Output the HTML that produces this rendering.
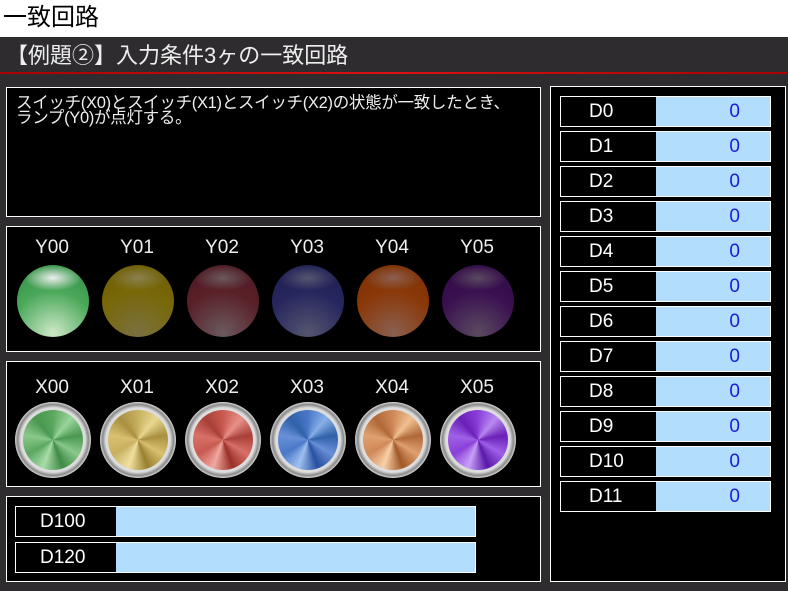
<!DOCTYPE html>
<html><head><meta charset="utf-8"><style>
*{margin:0;padding:0;box-sizing:border-box}
body{width:788px;height:591px;background:#2e2c2f;position:relative;overflow:hidden;font-family:"Liberation Sans","Noto Sans CJK JP",sans-serif;color:#fff}
.top{position:absolute;left:0;top:0;width:788px;height:37px;background:#fff;color:#000;font-size:24px;line-height:35px;padding-left:3px}
.sub{position:absolute;left:0;top:37px;width:788px;height:36px;background:#2e2c2f;font-size:22px;line-height:38px;padding-left:6px;color:#eee}
.red{position:absolute;left:0;top:72px;width:788px;height:2px;background:linear-gradient(90deg,#a00,#d11 50%,#a00)}
.p{position:absolute;background:#000;border:1px solid #fff}
.lab{position:absolute;width:80px;text-align:center;font-size:19px;color:#eee}
.lamp{position:absolute;width:72px;height:72px;border-radius:50%}
.btn{position:absolute;width:76px;height:76px;border-radius:50%;background:radial-gradient(circle,#ddd 60%,#888 66%,#eee 72%,#666 100%)}
.btn i{position:absolute;left:8px;top:8px;width:60px;height:60px;border-radius:50%}
.d{position:absolute;height:31px;border:1px solid #fff;background:#000;font-size:19px}
.d span{position:absolute;left:28px;top:4px}
.d b{position:absolute;font-weight:normal;background:#b3ddfd;top:0;bottom:0;color:#1a1adc;text-align:right;padding-right:30px;line-height:30px}
</style></head><body>
<div class="top">一致回路</div>
<div class="sub">【例題②】入力条件3ヶの一致回路</div>
<div class="red"></div>
<div class="p" style="left:6px;top:87px;width:535px;height:130px;font-size:16.5px;line-height:15px;padding:8px 0 0 9px;color:#eee;letter-spacing:-0.3px">スイッチ(X0)とスイッチ(X1)とスイッチ(X2)の状態が一致したとき、<br>ランプ(Y0)が点灯する。</div>
<div class="p" style="left:6px;top:226px;width:535px;height:126px"></div>
<div class="p" style="left:6px;top:361px;width:535px;height:126px"></div>
<div class="p" style="left:6px;top:496px;width:535px;height:86px"></div>
<div class="p" style="left:550px;top:86px;width:236px;height:496px"></div>

<div class="lab" style="left:12px;top:237px">Y00</div>
<div class="lab" style="left:97px;top:237px">Y01</div>
<div class="lab" style="left:182px;top:237px">Y02</div>
<div class="lab" style="left:267px;top:237px">Y03</div>
<div class="lab" style="left:352px;top:237px">Y04</div>
<div class="lab" style="left:437px;top:237px">Y05</div>
<div class="lamp" style="left:17px;top:265px;background:radial-gradient(ellipse 40% 18% at 50% 18%,#eee,transparent),radial-gradient(circle at 50% 95%,#cfe8c8,#4aa85a 55%,#2e8a3e)"></div>
<div class="lamp" style="left:102px;top:265px;background:radial-gradient(ellipse 40% 18% at 50% 18%,#8a8050,transparent),radial-gradient(circle at 50% 95%,#7a7040,#786808 55%,#6a5a00)"></div>
<div class="lamp" style="left:187px;top:265px;background:radial-gradient(ellipse 40% 18% at 50% 18%,#6a5a5e,transparent),radial-gradient(circle at 50% 95%,#6a5a5e,#5a2028 55%,#4a1820)"></div>
<div class="lamp" style="left:272px;top:265px;background:radial-gradient(ellipse 40% 18% at 50% 18%,#555570,transparent),radial-gradient(circle at 50% 95%,#555570,#26265e 55%,#1e1e50)"></div>
<div class="lamp" style="left:357px;top:265px;background:radial-gradient(ellipse 40% 18% at 50% 18%,#8a6050,transparent),radial-gradient(circle at 50% 95%,#8a6050,#8a3808 55%,#7a2e00)"></div>
<div class="lamp" style="left:442px;top:265px;background:radial-gradient(ellipse 40% 18% at 50% 18%,#5a4a60,transparent),radial-gradient(circle at 50% 95%,#5a4a60,#3a1050 55%,#300a44)"></div>

<div class="lab" style="left:12px;top:377px">X00</div>
<div class="lab" style="left:97px;top:377px">X01</div>
<div class="lab" style="left:182px;top:377px">X02</div>
<div class="lab" style="left:267px;top:377px">X03</div>
<div class="lab" style="left:352px;top:377px">X04</div>
<div class="lab" style="left:437px;top:377px">X05</div>
<div class="btn" style="left:15px;top:402px"><i style="background:conic-gradient(#5aa860,#9ad49a,#4a9850,#8ac88a,#3e8a46,#a8dca8,#5aa860,#8ac88a,#4a9850,#5aa860)"></i></div>
<div class="btn" style="left:100px;top:402px"><i style="background:conic-gradient(#c8b060,#e8d890,#a89040,#d8c070,#988030,#f0e0a0,#c8b060,#d8c070,#a89040,#c8b060)"></i></div>
<div class="btn" style="left:185px;top:402px"><i style="background:conic-gradient(#c85a50,#e89088,#a84038,#d87068,#983028,#f0a8a0,#c85a50,#d87068,#a84038,#c85a50)"></i></div>
<div class="btn" style="left:270px;top:402px"><i style="background:conic-gradient(#4a78c8,#88b0e8,#3060a8,#6890d8,#2850a0,#a0c0f0,#4a78c8,#6890d8,#3060a8,#4a78c8)"></i></div>
<div class="btn" style="left:355px;top:402px"><i style="background:conic-gradient(#d08858,#f0c090,#b06838,#e0a070,#a05828,#f8d0a8,#d08858,#e0a070,#b06838,#d08858)"></i></div>
<div class="btn" style="left:440px;top:402px"><i style="background:conic-gradient(#8a40d8,#b888f0,#6a20b8,#a060e8,#5a18a8,#c8a0f8,#8a40d8,#a060e8,#6a20b8,#8a40d8)"></i></div>

<div class="d" style="left:15px;top:506px;width:461px"><span style="left:24px">D100</span><b style="left:100px;right:0"></b></div>
<div class="d" style="left:15px;top:542px;width:461px"><span style="left:24px">D120</span><b style="left:100px;right:0"></b></div>

<div class="d" style="left:560px;top:96px;width:211px"><span>D0</span><b style="left:95px;right:0">0</b></div>
<div class="d" style="left:560px;top:131px;width:211px"><span>D1</span><b style="left:95px;right:0">0</b></div>
<div class="d" style="left:560px;top:166px;width:211px"><span>D2</span><b style="left:95px;right:0">0</b></div>
<div class="d" style="left:560px;top:201px;width:211px"><span>D3</span><b style="left:95px;right:0">0</b></div>
<div class="d" style="left:560px;top:236px;width:211px"><span>D4</span><b style="left:95px;right:0">0</b></div>
<div class="d" style="left:560px;top:271px;width:211px"><span>D5</span><b style="left:95px;right:0">0</b></div>
<div class="d" style="left:560px;top:306px;width:211px"><span>D6</span><b style="left:95px;right:0">0</b></div>
<div class="d" style="left:560px;top:341px;width:211px"><span>D7</span><b style="left:95px;right:0">0</b></div>
<div class="d" style="left:560px;top:376px;width:211px"><span>D8</span><b style="left:95px;right:0">0</b></div>
<div class="d" style="left:560px;top:411px;width:211px"><span>D9</span><b style="left:95px;right:0">0</b></div>
<div class="d" style="left:560px;top:446px;width:211px"><span>D10</span><b style="left:95px;right:0">0</b></div>
<div class="d" style="left:560px;top:481px;width:211px"><span>D11</span><b style="left:95px;right:0">0</b></div>
</body></html>
